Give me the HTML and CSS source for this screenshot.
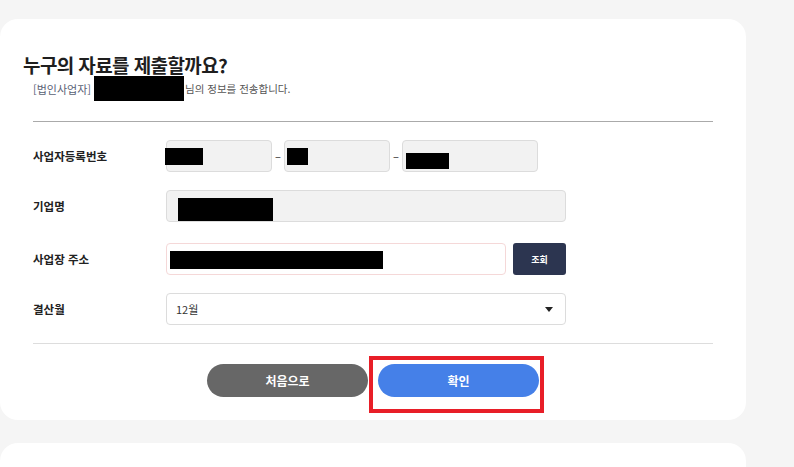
FILE: index.html
```html
<!DOCTYPE html>
<html lang="ko">
<head>
<meta charset="utf-8">
<title>제출</title>
<link rel="stylesheet" href="styles.css">
</head>
<body>
<div class="card">
  <h1 class="title">누구의 자료를 제출할까요?</h1>
  <p class="sub"><span class="sub-type">[법인사업자]</span><span class="redact r-name"></span><span class="sub-rest">님의 정보를 전송합니다.</span></p>
  <hr class="div1">
  <div class="form">
    <div class="row">
      <div class="label">사업자등록번호</div>
      <div class="field biz">
        <div class="inp gray w106"><span class="redact r-b1"></span></div>
        <span class="dash">–</span>
        <div class="inp gray w106"><span class="redact r-b2"></span></div>
        <span class="dash">–</span>
        <div class="inp gray w136"><span class="redact r-b3"></span></div>
      </div>
    </div>
    <div class="row">
      <div class="label">기업명</div>
      <div class="field">
        <div class="inp gray w399"><span class="redact r-co"></span></div>
      </div>
    </div>
    <div class="row row-addr">
      <div class="label">사업장 주소</div>
      <div class="field addr">
        <div class="inp pink w340"><span class="redact r-addr"></span></div>
        <button class="btn-search">조회</button>
      </div>
    </div>
    <div class="row">
      <div class="label">결산월</div>
      <div class="field">
        <div class="inp select w399"><span class="sel-text">12월</span><span class="caret"></span></div>
      </div>
    </div>
  </div>
  <hr class="div2">
  <div class="actions">
    <button class="btn btn-back">처음으로</button>
    <div class="confirm-wrap">
      <button class="btn btn-ok">확인</button>
      <span class="highlight"></span>
    </div>
  </div>
</div>
<div class="card2"></div>
</body>
</html>
```
FILE: styles.css
```css
* { box-sizing: border-box; }
html, body { margin: 0; padding: 0; }
body {
  background: #f5f5f5;
  font-family: "Noto Sans CJK KR", "Noto Sans", sans-serif;
  color: #222;
  width: 794px;
  height: 467px;
  overflow: hidden;
}
.card {
  margin-top: 19px;
  width: 746px;
  height: 401px;
  background: #fff;
  border-radius: 18px;
  padding: 31px 0 0 0;
}
.title {
  margin: 0 0 0 23px;
  font-size: 19px;
  line-height: 30px;
  font-weight: 700;
  letter-spacing: -0.6px;
  color: #1e1e1e;
}
.sub {
  margin: -4px 0 0 33px;
  display: flex;
  align-items: center;
  font-size: 10.5px;
  height: 25px;
  color: #555;
}
.sub-type { color: #5a6275; width: 61px; font-size: 11px; }
.redact { display: inline-block; background: #000; }
.r-name { width: 90px; height: 25px; margin-right: 1px; }
.div1 {
  margin: 20px 0 0 33px;
  width: 680px;
  border: 0;
  border-top: 1px solid #aaa;
}
.form { padding: 18px 0 0 33px; display: flex; flex-direction: column; gap: 18px; }
.row { display: flex; align-items: center; height: 32px; }
.row-addr { margin-top: 3px; }
.label { width: 133px; font-size: 11.5px; font-weight: 700; color: #222; }
.field { display: flex; align-items: center; }
.inp {
  height: 32px;
  border: 1px solid #dcdcdc;
  border-radius: 4px;
  display: flex;
  align-items: center;
  position: relative;
}
.gray { background: #f2f2f2; }
.pink { border-color: #f5d8d8; background: #fff; }
.w106 { width: 106px; }
.w136 { width: 136px; }
.w399 { width: 400px; }
.w340 { width: 340px; }
.dash { width: 12px; text-align: center; font-size: 11px; color: #222; }
.r-b1 { width: 38px; height: 17px; margin-left: -2px; }
.r-b2 { width: 21px; height: 17px; margin-left: 2px; }
.r-b3 { width: 43px; height: 16px; margin-left: 3px; margin-top: 10px; }
.r-co { width: 95px; height: 23px; margin-left: 11px; margin-top: 6px; }
.r-addr { width: 213px; height: 18px; margin-left: 3px; margin-top: 2px; }
.btn-search {
  margin-left: 7px;
  width: 53px;
  height: 32px;
  border: 0;
  border-radius: 3px;
  background: #2c3550;
  color: #fff;
  font-family: inherit;
  font-size: 9px;
  font-weight: 700;
  padding: 0;
}
.select { background: #fff; justify-content: space-between; padding: 0 12px 0 9px; }
.sel-text { font-size: 11px; color: #333; }
.caret {
  width: 0; height: 0;
  border-left: 4.5px solid transparent;
  border-right: 4.5px solid transparent;
  border-top: 5px solid #222;
}
.div2 {
  margin: 18px 0 0 33px;
  width: 680px;
  border: 0;
  border-top: 1px solid #ddd;
}
.actions {
  display: flex;
  gap: 10px;
  padding: 20px 0 0 207px;
}
.btn {
  width: 161px;
  height: 33px;
  border: 0;
  border-radius: 17px;
  color: #fff;
  font-family: inherit;
  font-size: 12px;
  font-weight: 700;
  padding: 0;
}
.btn-back { background: #676767; }
.btn-ok { background: #4580e8; }
.confirm-wrap { position: relative; }
.highlight {
  position: absolute;
  left: -9px; right: -5px; top: -8px; bottom: -16px;
  border: 4px solid #e81e28;
}
.card2 {
  margin-top: 23px;
  width: 746px;
  height: 24px;
  background: #fff;
  border-radius: 18px 18px 0 0;
}
```
